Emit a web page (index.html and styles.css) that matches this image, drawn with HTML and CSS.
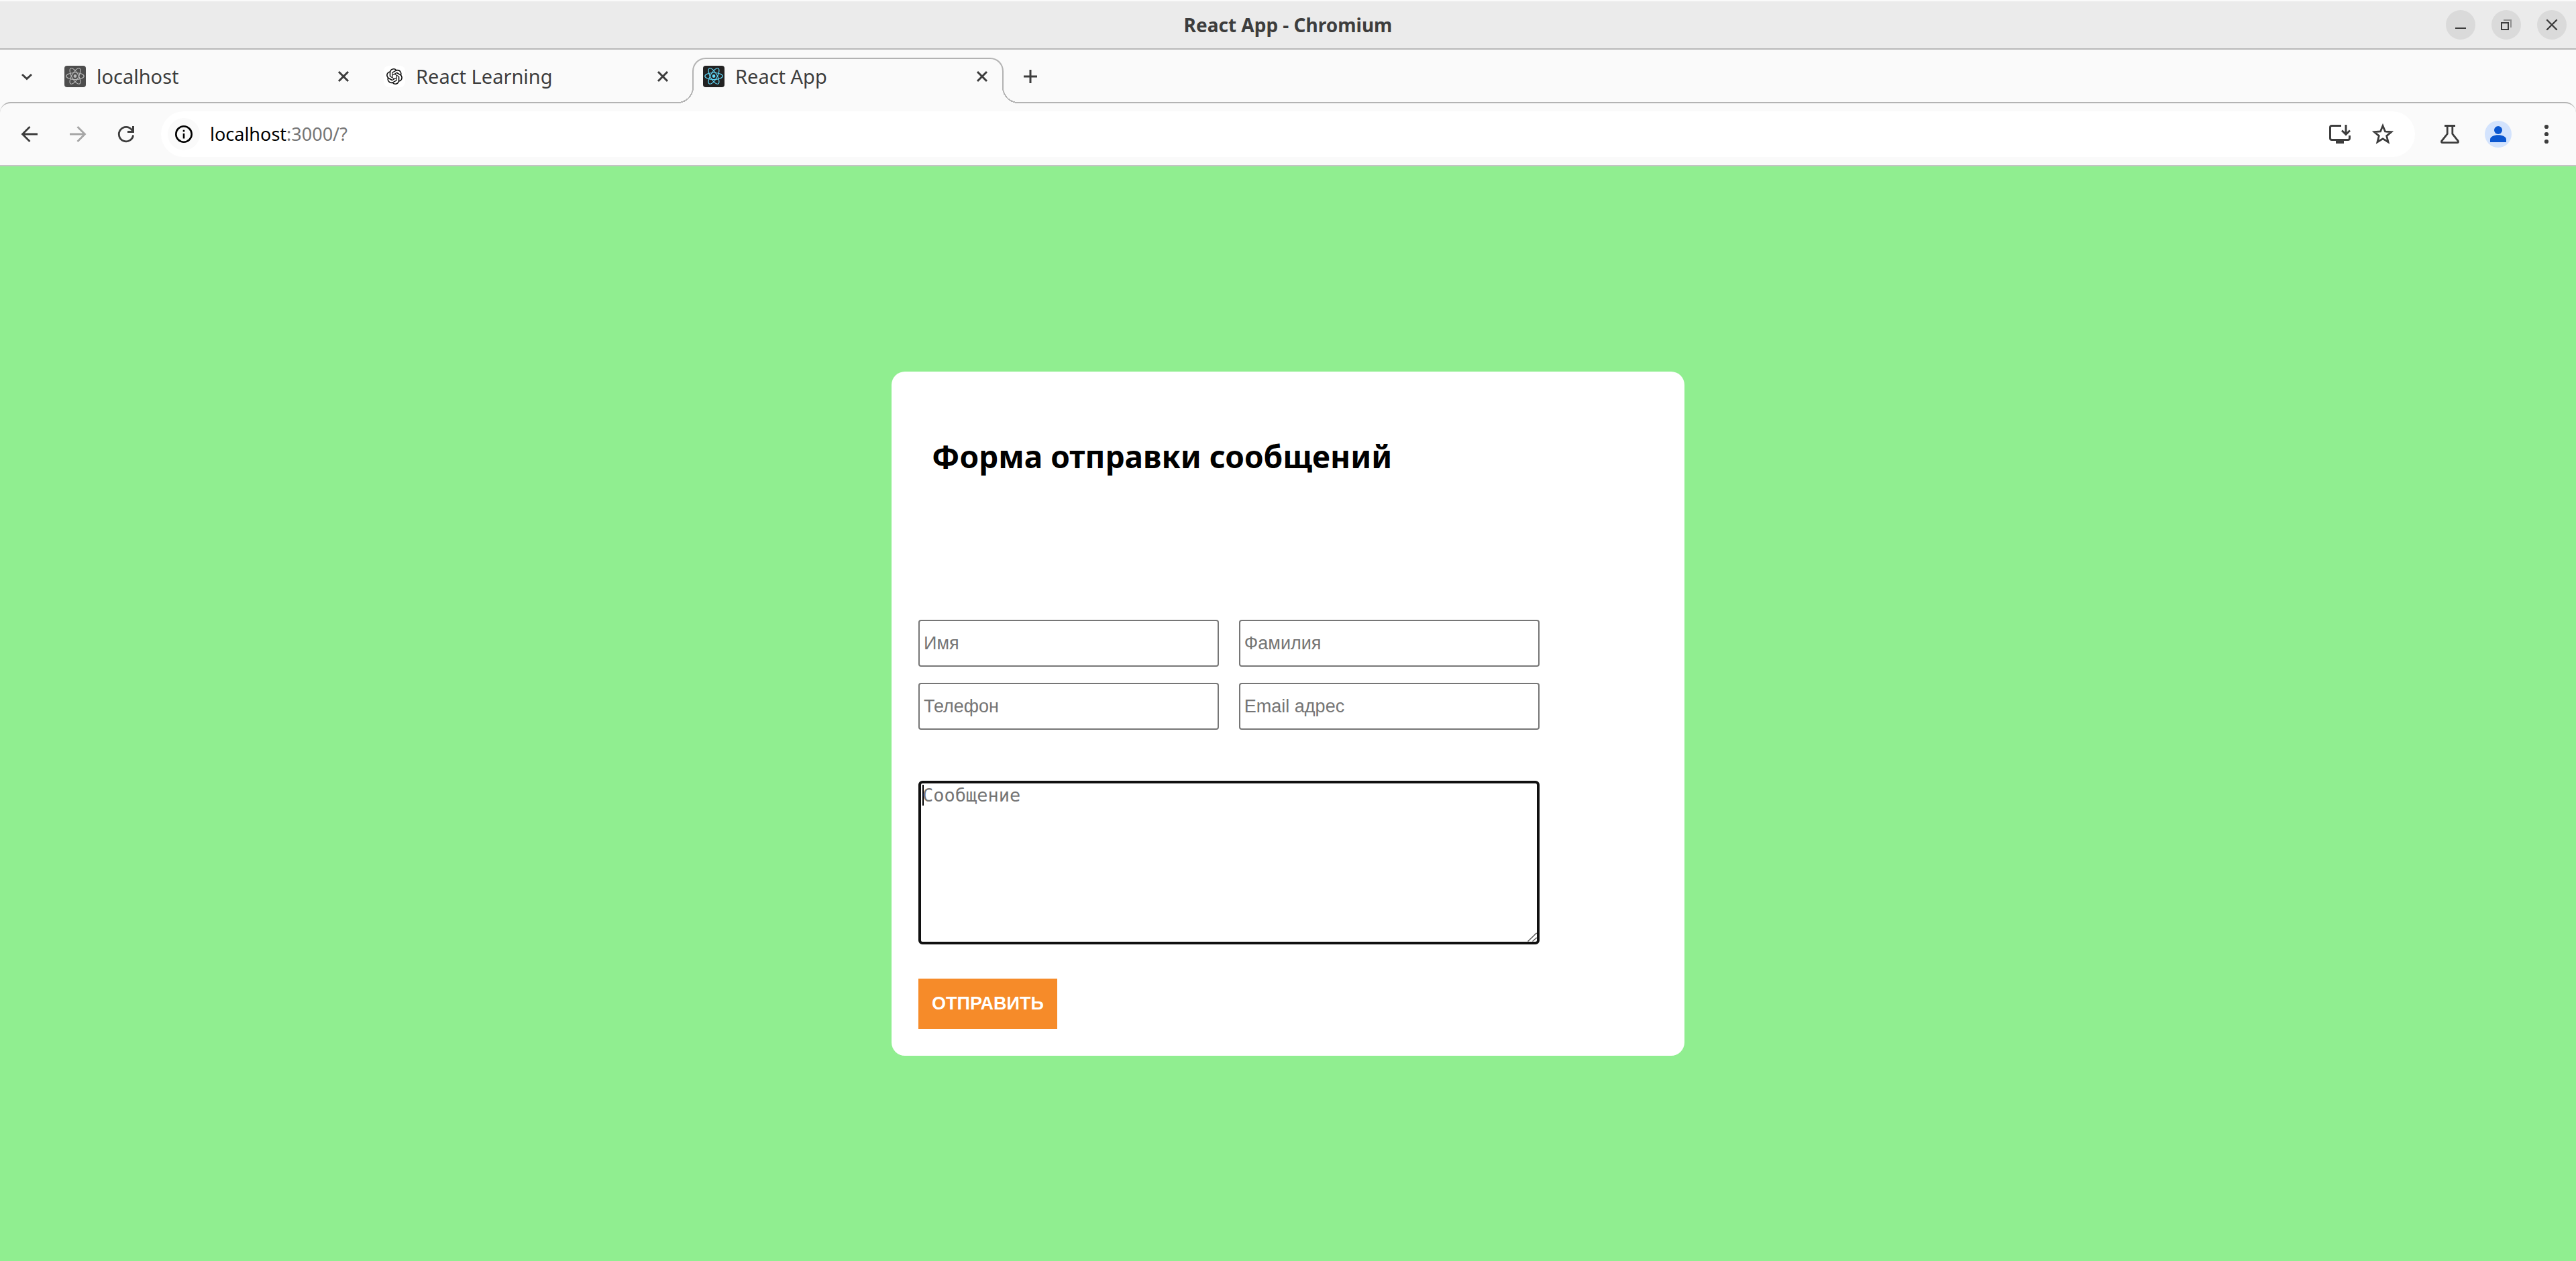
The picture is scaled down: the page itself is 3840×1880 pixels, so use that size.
FILE: index.html
```html
<!DOCTYPE html>
<html lang="ru">
<head>
<meta charset="utf-8">
<title>React App</title>
<link rel="stylesheet" href="styles.css">
</head>
<body>
<svg class="sprite" aria-hidden="true">
  <symbol id="react" viewBox="0 0 32 32">
    <g fill="none" stroke="currentColor" stroke-width="1.2">
      <ellipse cx="16" cy="15.5" rx="13.2" ry="5"/>
      <ellipse cx="16" cy="15.5" rx="13.2" ry="5" transform="rotate(60 16 15.5)"/>
      <ellipse cx="16" cy="15.5" rx="13.2" ry="5" transform="rotate(120 16 15.5)"/>
    </g>
    <circle cx="16" cy="15.5" r="2.4" fill="currentColor"/>
  </symbol>
  <symbol id="close" viewBox="0 0 32 32">
    <path d="M9 9L23 23M23 9L9 23" fill="none" stroke="currentColor" stroke-width="3"/>
  </symbol>
</svg>

<header class="titlebar">
  <h1 class="titlebar-text">React App - Chromium</h1>
  <div class="window-controls">
    <button class="window-button" aria-label="Minimize"><svg viewBox="0 0 44 44"><path d="M14 27H30" stroke="#3d3d3d" stroke-width="2"/></svg></button>
    <button class="window-button" aria-label="Restore"><svg viewBox="0 0 44 44" fill="none" stroke-width="2"><path d="M18 15H29V26" stroke="#8f8f8f"/><rect x="15" y="19" width="10" height="10" stroke="#3d3d3d"/></svg></button>
    <button class="window-button" aria-label="Close"><svg viewBox="0 0 44 44"><path d="M15 15L29 29M29 15L15 29" stroke="#3d3d3d" stroke-width="2.4" stroke-linecap="round"/></svg></button>
  </div>
</header>

<nav class="tabstrip">
  <button class="icon-button tab-search" aria-label="Search tabs"><svg viewBox="0 0 32 32"><path d="M9 13L16 19.5L23 13" fill="none" stroke="currentColor" stroke-width="3"/></svg></button>
  <div class="tab">
    <svg class="favicon favicon-muted"><use href="#react"/></svg>
    <span class="tab-title">localhost</span>
    <button class="icon-button" aria-label="Close tab"><svg><use href="#close"/></svg></button>
  </div>
  <div class="tab">
    <svg class="favicon favicon-light" viewBox="-4 -4 32 32"><path fill="currentColor" d="M22.2819 9.8211a5.9847 5.9847 0 0 0-.5157-4.9108 6.0462 6.0462 0 0 0-6.5098-2.9A6.0651 6.0651 0 0 0 4.9807 4.1818a5.9847 5.9847 0 0 0-3.9977 2.9 6.0462 6.0462 0 0 0 .7427 7.0966 5.98 5.98 0 0 0 .511 4.9107 6.051 6.051 0 0 0 6.5146 2.9001A5.9847 5.9847 0 0 0 13.2599 24a6.0557 6.0557 0 0 0 5.7718-4.2058 5.9894 5.9894 0 0 0 3.9977-2.9001 6.0557 6.0557 0 0 0-.7475-7.0729zm-9.022 12.6081a4.4755 4.4755 0 0 1-2.8764-1.0408l.1419-.0804 4.7783-2.7582a.7948.7948 0 0 0 .3927-.6813v-6.7369l2.02 1.1686a.071.071 0 0 1 .038.052v5.5826a4.504 4.504 0 0 1-4.4945 4.4944zm-9.6607-4.1254a4.4708 4.4708 0 0 1-.5346-3.0137l.142.0852 4.783 2.7582a.7712.7712 0 0 0 .7806 0l5.8428-3.3685v2.3324a.0804.0804 0 0 1-.0332.0615L9.74 19.9502a4.4992 4.4992 0 0 1-6.1408-1.6464zM2.3408 7.8956a4.485 4.485 0 0 1 2.3655-1.9728V11.6a.7664.7664 0 0 0 .3879.6765l5.8144 3.3543-2.0201 1.1685a.0757.0757 0 0 1-.071 0l-4.8303-2.7865A4.504 4.504 0 0 1 2.3408 7.872zm16.5963 3.8558L13.1038 8.364 15.1192 7.2a.0757.0757 0 0 1 .071 0l4.8303 2.7913a4.4944 4.4944 0 0 1-.6765 8.1042v-5.6772a.79.79 0 0 0-.407-.667zm2.0107-3.0231l-.142-.0852-4.7735-2.7818a.7759.7759 0 0 0-.7854 0L9.409 9.2297V6.8974a.0662.0662 0 0 1 .0284-.0615l4.8303-2.7866a4.4992 4.4992 0 0 1 6.6802 4.66zM8.3065 12.863l-2.02-1.1638a.0804.0804 0 0 1-.038-.0567V6.0742a4.4992 4.4992 0 0 1 7.3757-3.4537l-.142.0805L8.704 5.459a.7948.7948 0 0 0-.3927.6813zm1.0976-2.3654l2.602-1.4998 2.6069 1.4998v2.9994l-2.5974 1.4997-2.6067-1.4997Z"/></svg>
    <span class="tab-title">React Learning</span>
    <button class="icon-button" aria-label="Close tab"><svg><use href="#close"/></svg></button>
  </div>
  <div class="tab tab-active">
    <svg class="favicon favicon-dark"><use href="#react"/></svg>
    <span class="tab-title">React App</span>
    <button class="icon-button" aria-label="Close tab"><svg><use href="#close"/></svg></button>
  </div>
  <button class="icon-button new-tab" aria-label="New tab"><svg viewBox="0 0 32 32"><path d="M16 6V26M6 16H26" stroke="currentColor" stroke-width="3"/></svg></button>
</nav>

<div class="toolbar">
  <div class="nav-buttons">
    <button class="icon-button" aria-label="Back"><svg viewBox="0 0 32 32"><path d="M16.5 5L5.5 16L16.5 27M5.5 16H28" fill="none" stroke="currentColor" stroke-width="2.8"/></svg></button>
    <button class="icon-button" aria-label="Forward" disabled><svg viewBox="0 0 32 32"><path d="M15.5 5L26.500 16L15.500 27M26.500 16H4" fill="none" stroke="currentColor" stroke-width="2.8"/></svg></button>
    <button class="icon-button" aria-label="Reload"><svg viewBox="0 0 32 32"><path d="M26.600 17.500A10.700 10.700 0 1 1 24.500 9.600L26.600 12" fill="none" stroke="currentColor" stroke-width="2.8"/><path d="M25 4H28V14H18V11H25Z" fill="currentColor"/></svg></button>
  </div>
  <div class="omnibox">
    <button class="site-info" aria-label="Site information"><svg viewBox="0 0 32 32"><circle cx="16" cy="16" r="11.700" fill="none" stroke="currentColor" stroke-width="2.600"/><path d="M14.700 15H17.300V22.500H14.700ZM14.700 9.800H17.300V12.400H14.700Z" fill="currentColor"/></svg></button>
    <a class="url" href="#"><span class="url-host">localhost</span>:3000/?</a>
    <div class="omnibox-actions">
      <button class="icon-button" aria-label="Install app"><svg viewBox="0 0 32 32"><path d="M18 3.500H4a2.500 2.500 0 0 0-2.500 2.500V22a2.500 2.500 0 0 0 2.500 2.500H28a2.500 2.500 0 0 0 2.500-2.500V18" fill="none" stroke="currentColor" stroke-width="3"/><path d="M10 25H22V30H10Z" fill="currentColor"/><path d="M25 2V16M19 10.500L25 16.500L31 10.500" fill="none" stroke="currentColor" stroke-width="3"/></svg></button>
      <button class="icon-button" aria-label="Bookmark"><svg viewBox="0 0 32 32"><path d="M16 3.500L19.500 12L28.700 12.700L21.700 18.600L24 27.700L16 22.800L8 27.700L10.300 18.600L3.300 12.700L12.500 12Z" fill="none" stroke="currentColor" stroke-width="2.800"/></svg></button>
    </div>
  </div>
  <div class="toolbar-actions">
    <button class="icon-button" aria-label="Experiments"><svg viewBox="0 0 32 32"><path d="M8 3.500H24M12.200 4V15.500L3.700 26.300Q2.800 28.600 5 28.600H27Q29.200 28.600 28.300 26.300L19.800 15.500V4" fill="none" stroke="currentColor" stroke-width="2.800"/></svg></button>
    <button class="profile" aria-label="Profile"><svg viewBox="0 0 40 40" fill="#0b57d0"><circle cx="20" cy="14" r="6"/><path d="M8 32V28C8 19 32 19 32 28V32Z"/></svg></button>
    <button class="icon-button" aria-label="Menu"><svg viewBox="0 0 32 32" fill="currentColor"><circle cx="16" cy="5" r="3.100"/><circle cx="16" cy="16" r="3.100"/><circle cx="16" cy="27" r="3.100"/></svg></button>
  </div>
</div>

<main class="page">
  <section class="card">
    <h2 class="card-title">Форма отправки сообщений</h2>
    <form class="form">
      <div class="fields">
        <input class="field" type="text" placeholder="Имя" aria-label="Имя">
        <input class="field" type="text" placeholder="Фамилия" aria-label="Фамилия">
        <input class="field" type="tel" placeholder="Телефон" aria-label="Телефон">
        <input class="field" type="email" placeholder="Email адрес" aria-label="Email адрес">
      </div>
      <div class="message-box">
        <textarea class="message" placeholder="Сообщение" aria-label="Сообщение"></textarea>
        <svg class="grip" viewBox="0 0 14 14" aria-hidden="true"><path d="M0.500 13.500L13 1.500H14M7.500 13.500L13 8.500H14" fill="none" stroke="#555" stroke-width="1.400"/></svg>
      </div>
      <button class="submit" type="submit">ОТПРАВИТЬ</button>
    </form>
  </section>
</main>
</body>
</html>
```

FILE: styles.css
```css
* {
  box-sizing: border-box;
}

body {
  margin: 0;
  min-height: 100vh;
  display: flex;
  flex-direction: column;
  background: #fafafa;
  color: #3d3d3d;
  font-family: "Noto Sans", sans-serif;
}

button {
  margin: 0;
  padding: 0;
  border: 0;
  background: none;
  color: inherit;
  font: inherit;
}

svg {
  display: block;
  width: 100%;
  height: 100%;
}

.sprite {
  display: none;
}

/* Window title bar */
.titlebar {
  display: grid;
  grid-template-columns: 1fr auto 1fr;
  align-items: center;
  height: 74px;
  border-top: 2px solid #fafafa;
  border-bottom: 2px solid #b8b8b8;
  background: #ebebeb;
}

.titlebar-text {
  grid-column: 2;
  margin: 0;
  font-size: 28px;
  line-height: 40px;
}

.window-controls {
  display: flex;
  justify-content: flex-end;
  gap: 24px;
  padding-right: 14px;
}

.window-button {
  width: 44px;
  height: 44px;
  border-radius: 50%;
  background: #dadada;
}

/* Tabs */
.tabstrip {
  position: relative;
  z-index: 1;
  display: flex;
  align-items: flex-end;
  gap: 12px;
  height: 80px;
  padding-left: 24px;
  margin-bottom: -2px;
}

.icon-button {
  flex: none;
  width: 32px;
  height: 32px;
}

.tab-search,
.new-tab {
  margin-bottom: 24px;
}

.tab-search {
  margin-right: 12px;
}

.new-tab {
  margin-left: 12px;
}

.tab {
  position: relative;
  display: flex;
  align-items: center;
  flex: 0 1 464px;
  height: 68px;
  padding: 0 16px 12px;
}

.tab-active {
  border: 2px solid #b3b3b3;
  border-bottom: 0;
  border-radius: 20px 20px 0 0;
  padding: 0 14px 14px;
  background: #fafafa;
}

.tab-active::before,
.tab-active::after {
  content: "";
  position: absolute;
  bottom: 0;
  width: 24px;
  height: 24px;
}

.tab-active::before {
  left: -24px;
  background: radial-gradient(circle at 0 0, #fafafa 22px, #b3b3b3 22px 24px, #fafafa 24px);
}

.tab-active::after {
  right: -24px;
  background: radial-gradient(circle at 100% 0, #fafafa 22px, #b3b3b3 22px 24px, #fafafa 24px);
}

.favicon {
  flex: none;
  width: 32px;
  height: 32px;
  margin-right: 16px;
  border-radius: 4px;
}

.favicon-muted {
  background: #4d4d4d;
  color: #b8b8b8;
}

.favicon-light {
  background: #fff;
  color: #111;
  border-radius: 8px;
}

.favicon-dark {
  background: #222;
  color: #61dafb;
}

.tab-title {
  flex: 1;
  font-size: 29px;
  line-height: 40px;
  white-space: nowrap;
}

/* Toolbar */
.toolbar {
  display: flex;
  align-items: center;
  height: 96px;
  padding: 0 28px;
  border-top: 2px solid #b3b3b3;
  border-bottom: 2px solid #c4c4c4;
  border-radius: 16px 16px 0 0;
}

.nav-buttons {
  display: flex;
  gap: 40px;
  margin-right: 36px;
}

.icon-button:disabled {
  color: #a6a6a6;
}

.omnibox {
  flex: 1;
  display: flex;
  align-items: center;
  height: 68px;
  padding: 0 32px 0 10px;
  border-radius: 34px;
  background: #fff;
}

.site-info {
  width: 48px;
  height: 48px;
  padding: 8px;
  border-radius: 50%;
  background: #fafafa;
  color: #000;
}

.url {
  flex: 1;
  padding-left: 15px;
  color: #757575;
  font-size: 27px;
  line-height: 40px;
  text-decoration: none;
}

.url-host {
  color: #000;
}

.omnibox-actions {
  display: flex;
  gap: 32px;
}

.toolbar-actions {
  display: flex;
  align-items: center;
  gap: 36px;
  padding-left: 36px;
}

.profile {
  width: 40px;
  height: 40px;
  border-radius: 50%;
  background: #d3e3fd;
}

/* Page */
.page {
  flex: 1;
  display: flex;
  align-items: center;
  justify-content: center;
  background: #90ee90;
}

.card {
  width: 100%;
  max-width: 1182px;
  padding: 40px;
  border-radius: 20px;
  background: #fff;
}

.card-title {
  margin: 54px 20px 212px;
  color: #000;
  font-size: 46px;
  line-height: 64px;
}

.form {
  width: 84%;
}

.fields {
  display: grid;
  grid-template-columns: 1fr 1fr;
  gap: 24px 30px;
}

.field {
  min-width: 0;
  height: 70px;
  padding: 0 6px;
  border: 2px solid #767676;
  border-radius: 4px;
  background: #fff;
  font-family: "Liberation Sans", sans-serif;
  font-size: 27px;
}

.field::placeholder,
.message::placeholder {
  color: #757575;
}

.message-box {
  position: relative;
  margin: 76px 0 51px;
}

.message {
  display: block;
  width: 100%;
  height: 244px;
  padding: 2px;
  border: 4px solid #101010;
  border-radius: 6px;
  outline: 0;
  resize: none;
  background: linear-gradient(#000, #000) 2px 2px / 2px 31px no-repeat #fff;
  font-family: "DejaVu Sans Mono", monospace;
  font-size: 27px;
  line-height: 31px;
}

.grip {
  position: absolute;
  right: 4px;
  bottom: 4px;
  width: 14px;
  height: 14px;
}

.submit {
  height: 75px;
  padding: 0 20px;
  background: #f68b29;
  color: #fff;
  font-family: "Liberation Sans", sans-serif;
  font-size: 27px;
  font-weight: bold;
}
```
